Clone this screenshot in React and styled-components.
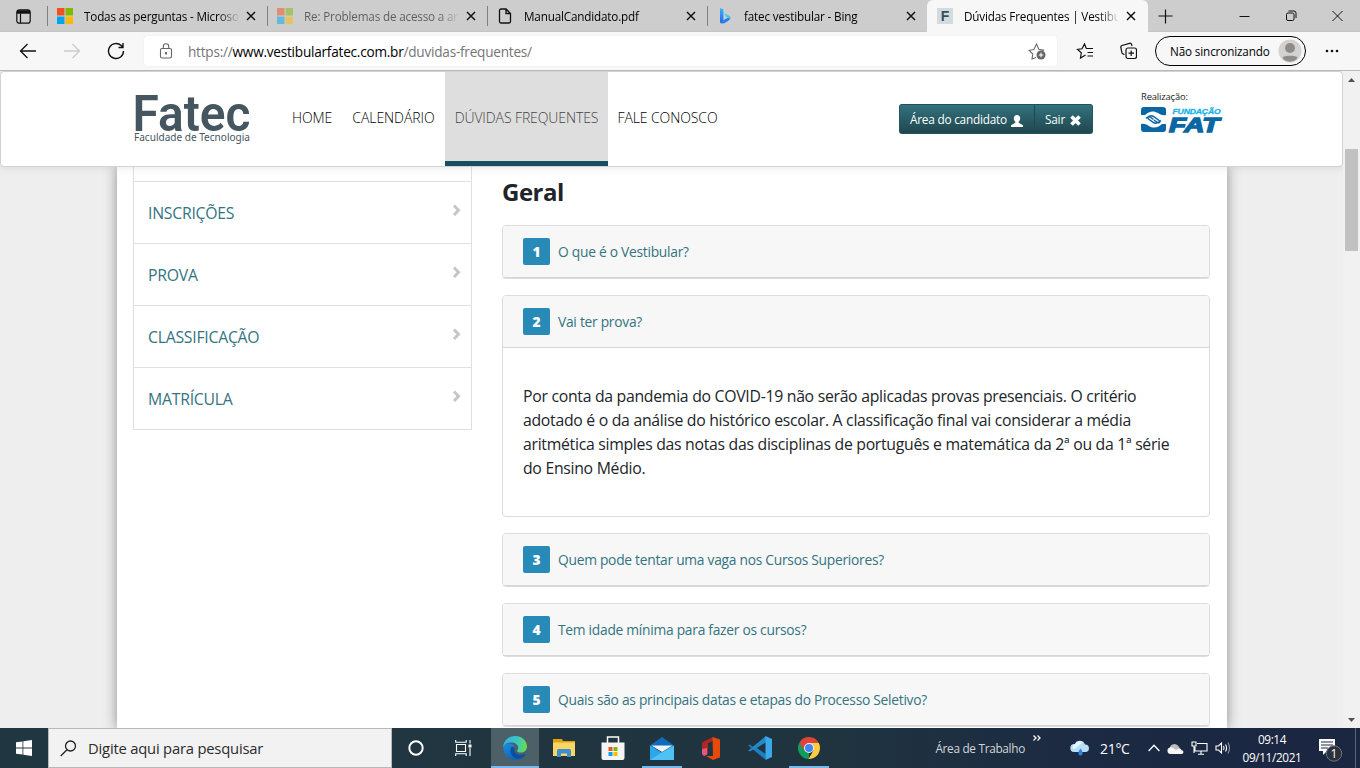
import React from "react";
import styled, { createGlobalStyle, css } from "styled-components";

const Global = createGlobalStyle`
  * { box-sizing: border-box; }
  body { margin: 0; overflow: hidden; font-family: "Segoe UI", "Open Sans", "Noto Sans", sans-serif; color: #212529; }
  svg { display: block; flex: none; }
`;

const Screen = styled.div`
  width: 1360px;
  height: 768px;
  display: flex;
  flex-direction: column;
  overflow: hidden;
  background: #eee;
`;

const Txt = styled.span`
  white-space: nowrap;
  letter-spacing: ${(p) => p.$ls || 0}px;
`;

/* ---------- browser tabs ---------- */
const TabStrip = styled.div`
  height: 32px;
  flex: none;
  display: flex;
  background: linear-gradient(#cdcdcd 30px, #c3c3c3 32px);
`;
const TabMenu = styled.div`
  width: 47px;
  display: flex;
  align-items: center;
  justify-content: center;
`;
const Tab = styled.div`
  width: ${(p) => (p.$active ? 221 : 220)}px;
  height: 32px;
  display: flex;
  align-items: center;
  padding: 0 10px 0 9px;
  font-size: 11.7px;
  letter-spacing: -0.17px;
  color: #000;
  border-left: 1px solid transparent;
  ${(p) =>
    p.$active
      ? css`
          background: #f7f7f7;
          border-radius: 6px 6px 0 0;
        `
      : css`
          background: linear-gradient(#808080, #808080) 0 6px / 1px 20px no-repeat;
          background-origin: border-box;
        `}
`;
const Favicon = styled.div`
  width: 16px;
  height: 16px;
  margin-right: 11px;
  display: flex;
  justify-content: center;
  align-items: center;
  flex: none;
  opacity: ${(p) => (p.$faded ? 0.5 : 1)};
`;
const TabTitle = styled.div`
  width: 154px;
  flex: none;
  overflow: hidden;
  white-space: nowrap;
  padding-bottom: 1px;
  opacity: ${(p) => (p.$faded ? 0.55 : 1)};
  mask-image: linear-gradient(90deg, #000 134px, transparent 156px);
`;
const TabClose = styled.div`
  margin-left: 8px;
`;
const FaviconF = styled.div`
  width: 16px;
  height: 16px;
  background: #d3dbdd;
  color: #34505f;
  font: bold 14px/16px "Liberation Sans", sans-serif;
  text-align: center;
`;
const NewTab = styled.div`
  margin: 9px 0 0 10px;
`;
const WindowButtons = styled.div`
  margin: 10px 17px 0 auto;
  display: flex;
  gap: 35px;
`;

/* ---------- address bar ---------- */
const Toolbar = styled.div`
  height: 39px;
  flex: none;
  display: flex;
  align-items: center;
  background: #f7f7f7;
  border-bottom: 1px solid #b9b9b9;
  padding-left: 19px;
`;
const NavIcons = styled.div`
  display: flex;
  gap: 26px;
  width: 125px;
`;
const Address = styled.div`
  width: 913px;
  height: 30px;
  display: flex;
  align-items: center;
  padding: 0 11px 0 14px;
  border-radius: 4px;
  background: #fff;
  box-shadow: 0 0 2px #e8e8e8;
  font-size: 13.6px;
  color: #757575;
`;
const Url = styled.div`
  margin: 0 auto 0 14px;
  white-space: nowrap;
  letter-spacing: -0.23px;
  b { font-weight: 400; color: #000; }
`;
const Profile = styled.div`
  width: 151px;
  height: 30px;
  margin-left: 18px;
  border: 1px solid #000;
  border-radius: 15px;
  display: flex;
  align-items: center;
  justify-content: space-between;
  padding: 0 3px 0 14px;
  font-size: 11.7px;
  letter-spacing: -0.15px;
  color: #000;
`;
const ToolIcon = styled.div`
  margin-left: ${(p) => p.$gap}px;
`;

/* ---------- page ---------- */
const Viewport = styled.div`
  height: 657px;
  flex: none;
  display: flex;
`;
const Page = styled.div`
  width: 1343px;
  display: flex;
  flex-direction: column;
  overflow: hidden;
`;
const Header = styled.header`
  height: 96px;
  flex: none;
  position: relative;
  z-index: 1;
  display: flex;
  background: #fff;
  border: 1px solid #d2d2d2;
  border-radius: 4px;
  box-shadow: 0 1px 8px rgba(0, 0, 0, 0.09);
  padding-left: 132px;
`;
const LogoBox = styled.div`
  width: 149px;
  padding-top: 20px;
`;
const Nav = styled.nav`
  display: flex;
`;
const NavItem = styled.a`
  width: ${(p) => p.$w}px;
  display: flex;
  align-items: center;
  justify-content: center;
  padding-top: ${(p) => (p.$active ? 1 : 0)}px;
  padding-bottom: ${(p) => (p.$active ? 0 : 4)}px;
  font-size: 14px;
  font-weight: 300;
  letter-spacing: -0.17px;
  color: ${(p) => (p.$active ? "#444" : "#000")};
  background: ${(p) => (p.$active ? "#dedede" : "none")};
  border-bottom: ${(p) => (p.$active ? "5px solid #184e62" : "none")};
`;
const ButtonGroup = styled.div`
  display: flex;
  height: 30px;
  margin: 32px 0 0 172px;
  border-radius: 3px;
  background: linear-gradient(#32727e, #20464e);
  border: 1px solid #235560;
  border-top-color: #1f525d;
  overflow: hidden;
`;
const HeaderButton = styled.button`
  display: flex;
  align-items: center;
  gap: ${(p) => p.$gap}px;
  width: ${(p) => p.$w}px;
  padding: 0 0 0 10px;
  border: 0;
  border-left: ${(p) => (p.$divided ? "1px solid #1d4b55" : "0")};
  background: none;
  color: #fff;
  font: 11.8px "Open Sans", sans-serif;
  letter-spacing: -0.2px;
  svg { margin-top: 3px; }
`;
const Sponsor = styled.div`
  margin: 18px 0 0 48px;
  font-size: 9.4px;
  line-height: 13px;
  letter-spacing: -0.15px;
  color: #222;
  svg { margin-top: 3px; }
`;

const Content = styled.div`
  width: 1110px;
  height: 561px;
  margin-left: 117px;
  display: flex;
  gap: 30px;
  padding-left: 16px;
  background: #fff;
  box-shadow: 0 0 12px rgba(0, 0, 0, 0.42);
`;
const Sidebar = styled.div`
  width: 339px;
  height: 263px;
  border: 1px solid #e0e0e0;
  border-top: 0;
  padding-top: 14px;
`;
const SideItem = styled.a`
  height: 62px;
  border-top: 1px solid #e0e0e0;
  display: flex;
  justify-content: space-between;
  padding: 19px 9px 0 14px;
  font-size: 15.8px;
  letter-spacing: -0.25px;
  line-height: 24px;
  color: #33747f;
  svg { margin-top: 3px; }
`;
const Main = styled.main`
  width: 708px;
`;
const Title = styled.h2`
  margin: 10px 0 18px;
  font-size: 24px;
  letter-spacing: -0.5px;
  line-height: 30px;
  font-weight: 700;
`;
const Card = styled.section`
  border: 1px solid #dcdcdc;
  border-radius: 4px;
  margin-bottom: 16px;
  background: #fff;
`;
const CardHead = styled.div`
  height: 52px;
  display: flex;
  align-items: center;
  gap: 8px;
  padding: 0 20px;
  background: #f7f7f7;
  border-bottom: 1px solid #d6d6d6;
  border-radius: 3px 3px 0 0;
  font-size: 13.8px;
  letter-spacing: -0.27px;
  color: #33747f;
`;
const Badge = styled.span`
  width: 27px;
  height: 27px;
  border-radius: 2px;
  background: #288ab7;
  color: #fff;
  font-weight: 800;
  line-height: 28px;
  text-align: center;
`;
const CardBody = styled.div`
  padding: 36px 20px;
  font-size: 15.8px;
  line-height: 24px;
`;
const Line = styled.div`
  white-space: nowrap;
  letter-spacing: -0.29px;
`;
const Scrollbar = styled.div`
  width: 17px;
  background: #f1f1f1;
  display: flex;
  flex-direction: column;
  align-items: center;
  justify-content: space-between;
  padding: 7px 0 6px;
`;
const Thumb = styled.div`
  width: 13px;
  height: 102px;
  background: #c1c1c1;
  margin: 67px 0 auto;
`;

/* ---------- taskbar ---------- */
const Taskbar = styled.div`
  height: 40px;
  flex: none;
  display: flex;
  background: linear-gradient(90deg, #203741, #20343f 60%, #1b2943 82%, #1b2641);
  color: #fff;
`;
const Tile = styled.div`
  width: ${(p) => p.$w || 48}px;
  height: 40px;
  margin-right: ${(p) => p.$mr || 0}px;
  display: flex;
  align-items: center;
  justify-content: center;
  background: ${(p) => (p.$active ? "#4d5f67" : "none")};
  ${(p) =>
    p.$bar &&
    css`
      background-image: linear-gradient(#76b9ed, #76b9ed);
      background-size: ${p.$bar}px 2px;
      background-position: center bottom;
      background-repeat: no-repeat;
    `}
`;
const Search = styled.div`
  width: 344px;
  height: 40px;
  display: flex;
  align-items: center;
  gap: 11px;
  padding-left: 11px;
  background: #f2f2f2;
  border: 1px solid #b8b8b8;
  color: #2b2b2b;
  font-size: 14.8px;
  letter-spacing: -0.24px;
`;
const Tray = styled.div`
  margin-left: auto;
  display: flex;
  align-items: center;
`;
const DeskLabel = styled.div`
  font-size: 11.8px;
  letter-spacing: -0.33px;
  padding-bottom: 1px;
  color: #d2d5d8;
  margin-right: 8px;
`;
const Chevrons = styled.div`
  align-self: flex-start;
  margin-top: 7px;
  margin-right: 29px;
`;
const Temp = styled.div`
  width: 30px;
  margin: 1px 18px 0 10px;
  font-size: 14px;
  letter-spacing: -0.3px;
`;
const TrayIcons = styled.div`
  display: flex;
  align-items: center;
  gap: 7px;
`;
const Clock = styled.div`
  width: 60px;
  margin: 0 15px 0 10px;
  font-size: 11.8px;
  letter-spacing: -0.35px;
  line-height: 18px;
  display: flex;
  flex-direction: column;
  align-items: center;
`;
const ShowDesk = styled.div`
  width: 5px;
  height: 40px;
  border-left: 1px solid #5a6478;
  margin-left: 12px;
`;

/* ---------- icons ---------- */
const Close = () => (
  <svg width="10" height="10" viewBox="0 0 10 10" stroke="#111" strokeWidth="1.5">
    <path d="M1 1l8 8M9 1l-8 8" />
  </svg>
);
const Windows4 = () => (
  <svg width="16" height="16" viewBox="0 0 15 15">
    <path fill="#f25022" d="M0 0h7v7H0z" />
    <path fill="#7fba00" d="M8 0h7v7H8z" />
    <path fill="#00a4ef" d="M0 8h7v7H0z" />
    <path fill="#ffb900" d="M8 8h7v7H8z" />
  </svg>
);
const PageIcon = () => (
  <svg width="14" height="16" viewBox="0 0 14 16" fill="none" stroke="#111" strokeWidth="1.3">
    <path d="M3 1h5l4.500 4.500V13.500a1.500 1.500 0 0 1-1.500 1.500H3a1.500 1.500 0 0 1-1.500-1.500V2.500A1.500 1.500 0 0 1 3 1zM8 1v4.500h4.500" />
  </svg>
);
const Bing = () => (
  <svg width="16" height="16" viewBox="0 0 16 16">
    <defs>
      <linearGradient id="bg1" x1="0" y1="0" x2="0" y2="1">
        <stop offset="0" stopColor="#39b8ff" />
        <stop offset="1" stopColor="#2563e8" />
      </linearGradient>
    </defs>
    <path fill="url(#bg1)" d="M3 0l2.600 1c.6.300.8.700.8 1.300V13L3 15z" />
    <path fill="#2f7bf0" d="M3 14.800c2 1.400 4 .8 5.500-.2L11 13c2-1.300 2.600-3 2-4.500L5.800 12.500z" />
    <path fill="#41c8f5" d="M7.300 5.300l3.700 1.600c2 .9 2.700 2.500 2.300 4.500-.5-1-1.300-1.500-2.500-2L9 8.700z" />
  </svg>
);
const FatMark = () => (
  <svg width="82" height="27" viewBox="0 0 82 27">
    <path fill="#0a67a3" d="M3 1h19q3 0 3 3v5c-3 .5-5 0-8-2C12 4 8 5.500 4 9H0V4q0-3 3-3z" />
    <path fill="#0a67a3" d="M22 26H3q-3 0-3-3v-5c3-.5 5 0 8 2 5 3 9 1.500 13-2h4V23q0 3-3 3z" />
    <path
      fill="none"
      stroke="#0a67a3"
      strokeWidth="1.500"
      d="M5 12.500c3-3 5-3.500 7.500-2l5.500 4c1.500 1.500.5 3-1.500 2l-3.500-2.500M20 14.500c-3 3-5 3.500-7.500 2l-5-3.500c-1.500-1.500-.5-3 1.500-2l3.500 2.500"
    />
    <text x="31.500" y="8.300" textLength="48" lengthAdjust="spacingAndGlyphs" fontFamily="Liberation Sans" fontWeight="700" fontStyle="italic" fontSize="7.800" fill="#18b0ea" stroke="#18b0ea" strokeWidth="0.300">
      FUNDAÇÃO
    </text>
    <text x="28" y="25.500" textLength="50" lengthAdjust="spacingAndGlyphs" fontFamily="Liberation Sans" fontWeight="700" fontStyle="italic" fontSize="19.500" fill="#0a67a3" stroke="#0a67a3" strokeWidth="1.300">
      FAT
    </text>
  </svg>
);
const ChevronRight = () => (
  <svg width="10" height="13" viewBox="0 0 10 13" fill="none" stroke="#c6c6c6" strokeWidth="3">
    <path d="M2 1.500l4.500 4.700L2 11" />
  </svg>
);
const EdgeIcon = () => (
  <svg width="24" height="24" viewBox="0 0 24 24">
    <defs>
      <linearGradient id="eg1" x1="0" y1="0.300" x2="1" y2="0.400">
        <stop offset="0" stopColor="#2fb0e8" />
        <stop offset="0.600" stopColor="#3cc8c0" />
        <stop offset="1" stopColor="#67dc4e" />
      </linearGradient>
      <linearGradient id="eg2" x1="0" y1="0" x2="0.600" y2="1">
        <stop offset="0" stopColor="#1c8fe0" />
        <stop offset="1" stopColor="#0f5fb5" />
      </linearGradient>
    </defs>
    <path fill="url(#eg2)" d="M.2 11C.5 16 3 24 12.500 24c4 0 7.500-1.800 9.800-5.300.4-.7-.1-1-.7-.7-2.600 1.300-7 1.400-9-1-2-2.300-2-4.500-.6-6.200C10 6.500 2 6 .2 11z" />
    <path fill="#0b4f9c" d="M8.600 10.800c-2 3.200-1.700 9.500 4.900 11.800 3.700.4 6.900-1.200 8.800-3.900.4-.7-.1-1-.7-.7-2.600 1.300-7 1.400-9-1-1.700-2-1.900-4-1-5.600z" />
    <path fill="url(#eg1)" d="M.1 11.500C.4 5 5.300 0 12 0c7 0 12 5 12 10.500 0 3.500-2.500 6-6 6-2.600 0-4-.7-4-1.500 0-.6 1.200-1.200 1.200-3.200C15.200 8.500 12 6.500 8 6.500c-4 0-7 2-7.900 5z" />
  </svg>
);
const FolderIcon = () => (
  <svg width="22" height="20" viewBox="0 0 22 20">
    <path fill="#e0a30c" d="M0 1h9l1 2h12v4H0z" />
    <path fill="#fdd565" d="M0 4.500h22V18H0z" />
    <path fill="#3d8fd0" d="M4 19v-6.500q0-1.500 1.500-1.500h11q1.500 0 1.500 1.500V19h-4v-3.500H8V19z" />
  </svg>
);
const StoreIcon = () => (
  <svg width="24" height="26" viewBox="0 0 24 26">
    <path fill="none" stroke="#fff" strokeWidth="1.500" d="M6.500 8V2h11v6" />
    <path fill="#f4f4f4" d="M.5 7.500h23V23q0 2-2 2h-19q-2 0-2-2z" />
    <path fill="#f25022" d="M7.500 12H11.500v4h-4z" />
    <path fill="#7fba00" d="M12.500 12h4v4h-4z" />
    <path fill="#00a4ef" d="M7.500 17H11.500v4h-4z" />
    <path fill="#ffb900" d="M12.500 17h4v4h-4z" />
  </svg>
);
const MailIcon = () => (
  <svg width="24" height="23" viewBox="0 0 24 23">
    <path fill="#0f6cbd" d="M0 8.500L12 0l12 8.500V12H0z" />
    <path fill="#eef4f8" d="M1.500 8.500h21L12 15z" />
    <path fill="#2ea5e8" d="M0 8.500l24 14.500H0z" />
    <path fill="#4cc2f5" d="M24 8.500V23H0l14-9z" />
  </svg>
);
const OfficeIcon = () => (
  <svg width="18" height="23" viewBox="0 0 18 23">
    <path fill="#b3261c" d="M0 5.500L11 0v4L6 6v11l-4 2-2-2z" />
    <path fill="#dd5a86" d="M0 12l5-1v6.500L2 19l-2-2z" />
    <path fill="#e64a0b" d="M10.500 0L18 2.500v17.700L11 23l-7-4h7z" />
  </svg>
);
const CodeIcon = () => (
  <svg width="24" height="24" viewBox="0 0 24 24">
    <path fill="#1b7fc4" d="M18 0L5.200 11.300 1.800 8.500.2 9.500l17 14 .8-5.200L9 12l9-6z" />
    <path fill="#2489ca" d="M.2 14.500l1.600 1L18 6V0z" />
    <path fill="#39a9ec" d="M17.500 0L24 3v18l-6.500 3z" />
  </svg>
);
const ChromeIcon = () => (
  <svg width="22" height="22" viewBox="0 0 22 22">
    <path fill="#0f9d58" d="M11 11v11A11 11 0 0 1 1.470 5.500z" />
    <path fill="#db4437" d="M11 6h9.800A11 11 0 0 0 1.500 5.500l5 8.500z" />
    <path fill="#ffcd40" d="M11 6h9.800A11 11 0 0 1 10.500 22l5-8.500z" />
    <circle cx="11" cy="11" r="5" fill="#f1f1f1" />
    <circle cx="11" cy="11" r="4" fill="#4285f4" />
  </svg>
);

const tabs = [
  { title: "Todas as perguntas - Microsoft", icon: <Windows4 /> },
  { title: "Re: Problemas de acesso a area", icon: <Windows4 />, faded: true },
  { title: "ManualCandidato.pdf", icon: <PageIcon /> },
  { title: "fatec vestibular - Bing", icon: <Bing /> },
  { title: "Dúvidas Frequentes | Vestibular", icon: <FaviconF>F</FaviconF>, active: true },
];
const sideItems = ["INSCRIÇÕES", "PROVA", "CLASSIFICAÇÃO", "MATRÍCULA"];
const questions = [
  { q: "O que é o Vestibular?" },
  {
    q: "Vai ter prova?",
    lines: [
      "Por conta da pandemia do COVID-19 não serão aplicadas provas presenciais. O critério",
      "adotado é o da análise do histórico escolar. A classificação final vai considerar a média",
      "aritmética simples das notas das disciplinas de português e matemática da 2ª ou da 1ª série",
      "do Ensino Médio.",
    ],
  },
  { q: "Quem pode tentar uma vaga nos Cursos Superiores?" },
  { q: "Tem idade mínima para fazer os cursos?" },
  { q: "Quais são as principais datas e etapas do Processo Seletivo?" },
];

export default function App() {
  return (
    <Screen>
      <Global />
      <TabStrip>
        <TabMenu>
          <svg width="15" height="15" viewBox="0 0 15 15" fill="none" stroke="#111" strokeWidth="1.200">
            <rect x="0.800" y="0.800" width="13.400" height="13.400" rx="2.500" />
            <path d="M1 3h13" strokeWidth="3.500" />
            <path d="M4.500 4v10" />
          </svg>
        </TabMenu>
        {tabs.map((t) => (
          <Tab key={t.title} $active={t.active}>
            <Favicon $faded={t.faded}>{t.icon}</Favicon>
            <TabTitle $faded={t.faded}>{t.title}</TabTitle>
            <TabClose><Close /></TabClose>
          </Tab>
        ))}
        <NewTab>
          <svg width="15" height="15" viewBox="0 0 15 15" stroke="#111" strokeWidth="1.200">
            <path d="M7.500 .5v14M.5 7h14" />
          </svg>
        </NewTab>
        <WindowButtons>
          <svg width="11" height="12" viewBox="0 0 11 12" stroke="#111"><path d="M.5 6.500h10" /></svg>
          <svg width="12" height="12" viewBox="0 0 12 12" fill="none" stroke="#111">
            <rect x="1.500" y="3" width="7.500" height="7.500" rx="1.500" />
            <path d="M3.500 1h5.500q2 0 2 2v5" />
          </svg>
          <svg width="11" height="12" viewBox="0 0 11 12" stroke="#111"><path d="M.5 1l10 10M10.500 1l-10 10" /></svg>
        </WindowButtons>
      </TabStrip>

      <Toolbar>
        <NavIcons>
          <svg width="18" height="18" viewBox="0 0 18 18" fill="none" stroke="#111" strokeWidth="1.300">
            <path d="M17 9H1.500M8.500 2L1.500 9l7 7" />
          </svg>
          <svg width="18" height="18" viewBox="0 0 18 18" fill="none" stroke="#ccc" strokeWidth="1.300">
            <path d="M1 9h15.500M9.500 2l7 7-7 7" />
          </svg>
          <svg width="18" height="18" viewBox="0 0 18 18" fill="none" stroke="#111" strokeWidth="1.400">
            <path d="M16.500 9a7.500 7.500 0 1 1-2.300-5.400l1.600 1.600M16 1v4.500h-4.500" />
          </svg>
        </NavIcons>
        <Address>
          <svg width="16" height="16" viewBox="0 0 16 16" fill="none" stroke="#666" strokeWidth="1.100">
            <rect x="2.500" y="5.500" width="11" height="9.500" rx="1.500" />
            <path d="M5.300 5.500V3.500a2.700 2.700 0 0 1 5.400 0v2" />
            <circle cx="8" cy="10.300" r="0.700" fill="#555" />
          </svg>
          <Url>https://<b>www.vestibularfatec.com.br</b>/duvidas-frequentes/</Url>
          <svg width="18" height="18" viewBox="0 0 18 18" fill="none" stroke="#6a6a6a" strokeWidth="1.100">
            <path d="M8 15.500l-4 1.500.8-5L1.200 8.300l4.700-.8L8.500 2l2.300 5.300 4.700.8-1.300 1.500" />
            <circle cx="13" cy="13" r="4.500" fill="#666" stroke="none" />
            <path d="M13 10.800v4.400M10.800 13h4.400" stroke="#fff" />
          </svg>
        </Address>
        <ToolIcon $gap={19}>
          <svg width="18" height="18" viewBox="0 0 18 18" fill="none" stroke="#111" strokeWidth="1.200">
            <path d="M10 6.500h7M11.500 10.500h5.500M11.500 14h5.500M9.500 13l-5 3 .8-5.200L1.500 7.500l4.500-.7L8.500 2l1.700 4.300" />
          </svg>
        </ToolIcon>
        <ToolIcon $gap={26}>
          <svg width="17" height="18" viewBox="0 0 17 18" fill="none" stroke="#111" strokeWidth="1.200">
            <rect x="6" y="6" width="10.500" height="10.500" rx="2" />
            <path d="M11.200 8.500v5.500M8.500 11.200H14M4.500 12.500l-1-.3Q2.500 12 2 11L.8 5.500Q.6 4 2 3.500L9.500 1.300q1.500-.4 2 1l.5 1.700" />
          </svg>
        </ToolIcon>
        <Profile>
          <Txt $ls={-0.13}>Não sincronizando</Txt>
          <svg width="24" height="24" viewBox="0 0 24 24">
            <circle cx="12" cy="12" r="11.500" fill="#d4d2d0" />
            <circle cx="12" cy="9" r="5" fill="#8f8b88" />
            <path fill="#8f8b88" d="M4.500 18.500c1-2.500 14-2.500 15 0-2 5.500-13 5.500-15 0z" />
          </svg>
        </Profile>
        <ToolIcon $gap={19}>
          <svg width="14" height="4" viewBox="0 0 14 4" fill="#111">
            <circle cx="2" cy="2" r="1.300" /><circle cx="7" cy="2" r="1.300" /><circle cx="12" cy="2" r="1.300" />
          </svg>
        </ToolIcon>
      </Toolbar>

      <Viewport>
        <Page>
          <Header>
            <LogoBox>
              <svg width="120" height="56" viewBox="0 0 120 56" fill="#465661" fontFamily="Roboto">
                <text x="-0.500" y="38.500" textLength="118" lengthAdjust="spacingAndGlyphs" fontWeight="600" fontSize="49.500">Fatec</text>
                <text x="1" y="49" textLength="116" fontSize="10" fontFamily="Noto Sans" lengthAdjust="spacingAndGlyphs">Faculdade de Tecnologia</text>
              </svg>
            </LogoBox>
            <Nav>
              <NavItem $w={60}><Txt $ls={-0.12}>HOME</Txt></NavItem>
              <NavItem $w={103}><Txt $ls={-0.05}>CALENDÁRIO</Txt></NavItem>
              <NavItem $w={163} $active><Txt $ls={-0.1}>DÚVIDAS FREQUENTES</Txt></NavItem>
              <NavItem $w={119}><Txt $ls={-0.1}>FALE CONOSCO</Txt></NavItem>
            </Nav>
            <ButtonGroup>
              <HeaderButton $w={134} $gap={4}>
                <Txt $ls={-0.22}>Área do candidato</Txt>
                <svg width="12" height="12" viewBox="0 0 12 12" fill="#fff">
                  <path d="M6 0c2 0 3.200 1.300 3.200 3.300 0 1.500-.6 2.700-1.500 3.500v.9L12 10.300V12H0v-1.700l4.300-2.600v-.9C3.400 6 2.800 4.800 2.800 3.300 2.800 1.300 4 0 6 0z" />
                </svg>
              </HeaderButton>
              <HeaderButton $w={58} $gap={5} $divided>
                <Txt $ls={-0.2}>Sair</Txt>
                <svg width="11" height="11" viewBox="0 0 11 11" stroke="#fff" strokeWidth="3.600">
                  <path d="M1.500 1.500l8 8M9.500 1.500l-8 8" />
                </svg>
              </HeaderButton>
            </ButtonGroup>
            <Sponsor>
              <Txt $ls={-0.15}>Realização:</Txt>
              <FatMark />
            </Sponsor>
          </Header>
          <Content>
            <Sidebar>
              {sideItems.map((s) => (
                <SideItem key={s}>
                  <Txt $ls={-0.25}>{s}</Txt>
                  <ChevronRight />
                </SideItem>
              ))}
            </Sidebar>
            <Main>
              <Title>Geral</Title>
              {questions.map((item, i) => (
                <Card key={item.q}>
                  <CardHead>
                    <Badge>{i + 1}</Badge>
                    <Txt $ls={-0.27}>{item.q}</Txt>
                  </CardHead>
                  {item.lines && (
                    <CardBody>
                      {item.lines.map((l) => <Line key={l}>{l}</Line>)}
                    </CardBody>
                  )}
                </Card>
              ))}
            </Main>
          </Content>
        </Page>
        <Scrollbar>
          <svg width="7" height="4" viewBox="0 0 7 4"><path fill="#505050" d="M0 4l3.500-4L7 4z" /></svg>
          <Thumb />
          <svg width="7" height="4" viewBox="0 0 7 4"><path fill="#505050" d="M0 0l3.500 4L7 0z" /></svg>
        </Scrollbar>
      </Viewport>

      <Taskbar>
        <Tile>
          <svg width="16" height="16" viewBox="0 0 16 16" fill="#fff">
            <path d="M0 2.300L6.500 1.400v6.200H0zM7.300 1.300L16 0v7.600H7.300zM0 8.400h6.500v6.200L0 13.700zM7.300 8.400H16V16l-8.700-1.300z" />
          </svg>
        </Tile>
        <Search>
          <svg width="17" height="17" viewBox="0 0 17 17" fill="none" stroke="#222" strokeWidth="1.300">
            <circle cx="10.500" cy="6" r="5" /><path d="M7 9.700L.7 16" />
          </svg>
          <Txt $ls={-0.21}>Digite aqui para pesquisar</Txt>
        </Search>
        <Tile>
          <svg width="16" height="16" viewBox="0 0 16 16" fill="none" stroke="#fff" strokeWidth="2"><circle cx="8" cy="8" r="6.700" /></svg>
        </Tile>
        <Tile $w={47} $mr={4}>
          <svg width="17" height="16" viewBox="0 0 17 16" fill="none" stroke="#fff" strokeWidth="1.100">
            <path d="M1.500 4.500h9v7h-9zM.7 0v2.200h10.500V0M.7 16v-2.200h10.500V16M15 0v3.500M15 8v8" />
            <path d="M13.500 4.500h3v3h-3z" fill="#fff" stroke="none" />
          </svg>
        </Tile>
        <Tile $mr={1} $active $bar={48}><EdgeIcon /></Tile>
        <Tile $mr={1}><FolderIcon /></Tile>
        <Tile $mr={1}><StoreIcon /></Tile>
        <Tile $mr={1} $bar={40}><MailIcon /></Tile>
        <Tile $mr={1}><OfficeIcon /></Tile>
        <Tile $mr={1}><CodeIcon /></Tile>
        <Tile $bar={40}><ChromeIcon /></Tile>
        <Tray>
          <DeskLabel><Txt $ls={-0.3}>Área de Trabalho</Txt></DeskLabel>
          <Chevrons>
            <svg width="8" height="6" viewBox="0 0 8 6" fill="none" stroke="#fff" strokeWidth="1.300">
              <path d="M.5 .5L3 3 .5 5.500M4.500 .5L7 3 4.500 5.500" />
            </svg>
          </Chevrons>
          <svg width="20" height="16" viewBox="0 0 20 16">
            <path fill="#b9defa" d="M4 12a4 4 0 0 1 .7-8A5.500 5.500 0 0 1 15 4.500 3.800 3.800 0 0 1 16 12z" />
            <path fill="#e8f5ff" d="M3.500 9a3 3 0 0 1 2-5A4.500 4.500 0 0 1 13 3C9 3 8 8 3.500 9z" />
            <path fill="#2788e0" d="M10.500 8.500c3 3.500 2.500 7 0 7s-3-3.500 0-7z" />
          </svg>
          <Temp><Txt $ls={-0.3}>21°C</Txt></Temp>
          <TrayIcons>
            <svg width="12" height="8" viewBox="0 0 12 8" fill="none" stroke="#fff" strokeWidth="1.300"><path d="M.6 7L6 1.300 11.400 7" /></svg>
            <svg width="17" height="11" viewBox="0 0 17 11">
              <path fill="#bdbdbd" d="M3 8a4.800 4.800 0 0 1 9-4l3 4z" />
              <path fill="#f5f5f5" d="M3.500 11a3.300 3.300 0 0 1-.5-6.500c2-.5 3 .5 6 2.500 1.500-1.500 4.500-1.800 5.500.3 2.500 0 2.500 3.500.3 3.700z" />
            </svg>
            <svg width="17" height="14" viewBox="0 0 17 14" fill="none" stroke="#fff" strokeWidth="1.100">
              <path d="M6 2.500h10v7.500H4V6M1 1h4v4H1zM3 5v7M10 10v3M7 13.300h6" />
            </svg>
            <svg width="17" height="14" viewBox="0 0 17 14" fill="none" stroke="#fff" strokeWidth="1.100">
              <path d="M1 5h2.500L6.500 2v10l-3-3H1zM8.500 5q1.200 2 0 4M10.500 3.500q2.200 3.500 0 7" />
              <path d="M12.800 1.500q3.500 5.500 0 11" stroke="#8b93a3" />
            </svg>
          </TrayIcons>
          <Clock><Txt $ls={-0.4}>09:14</Txt><Txt $ls={-0.37}>09/11/2021</Txt></Clock>
          <svg width="26" height="28" viewBox="0 0 26 28">
            <path fill="#fff" d="M2 5h16v12h-8l-4 4v-4H2z" />
            <path stroke="#1c2842" strokeWidth="1.200" d="M4 8h12M4 11h12M4 14h7" />
            <circle cx="17" cy="19.500" r="7.700" fill="#2c3139" stroke="#70757c" />
            <text x="17" y="24" textAnchor="middle" fontSize="12" fill="#fff" fontFamily="Open Sans">1</text>
          </svg>
          <ShowDesk />
        </Tray>
      </Taskbar>
    </Screen>
  );
}
